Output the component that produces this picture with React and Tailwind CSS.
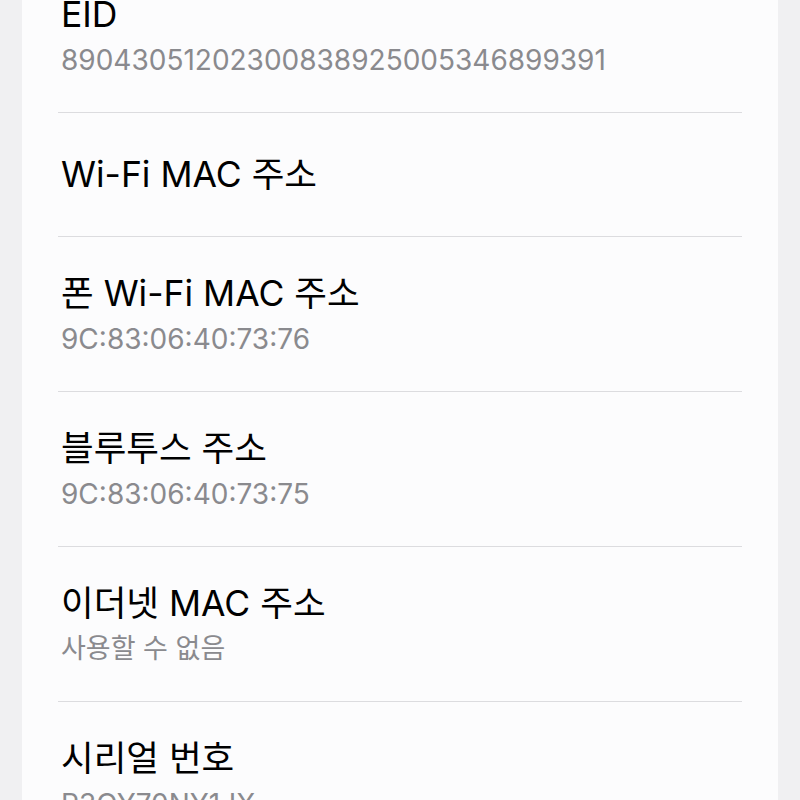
import React from "react";

const rows = [
  { title: "EID", value: "89043051202300838925005346899391" },
  { title: "Wi-Fi MAC 주소" },
  { title: "폰 Wi-Fi MAC 주소", value: "9C:83:06:40:73:76" },
  { title: "블루투스 주소", value: "9C:83:06:40:73:75" },
  { title: "이더넷 MAC 주소", value: "사용할 수 없음", hangulValue: true },
  { title: "시리얼 번호", value: "P3QY70NY1JX" },
];

const font = {
  fontFamily: '"Inter", "Noto Sans CJK KR", sans-serif',
};

function Row({ title, value, hangulValue, first }) {
  const border = first ? "" : "border-t border-[#dcdcdf]";
  if (!value) {
    return (
      <div className={`${border} h-[124px] flex items-center pl-[3px]`}>
        <div className="text-[35.5px] leading-[41px] text-black">{title}</div>
      </div>
    );
  }
  return (
    <div className={`${border} pt-[36px] pb-[35px] pl-[3px]`}>
      <div className="text-[35.5px] leading-[41px] text-black">{title}</div>
      <div
        className={
          hangulValue
            ? "mt-[8px] text-[27px] leading-[34px] text-[#8a8a8e]"
            : "mt-[8px] text-[28px] leading-[34px] text-[#8a8a8e]"
        }
      >
        {value}
      </div>
    </div>
  );
}

export default function App() {
  return (
    <div className="w-[800px] h-[800px] overflow-hidden bg-[#f0f0f2]" style={font}>
      <div className="mx-[22px] -mt-[42px] bg-[#fcfcfd] px-[36px] min-h-[900px]">
        {rows.map((r, i) => (
          <Row key={i} {...r} first={i === 0} />
        ))}
      </div>
    </div>
  );
}
